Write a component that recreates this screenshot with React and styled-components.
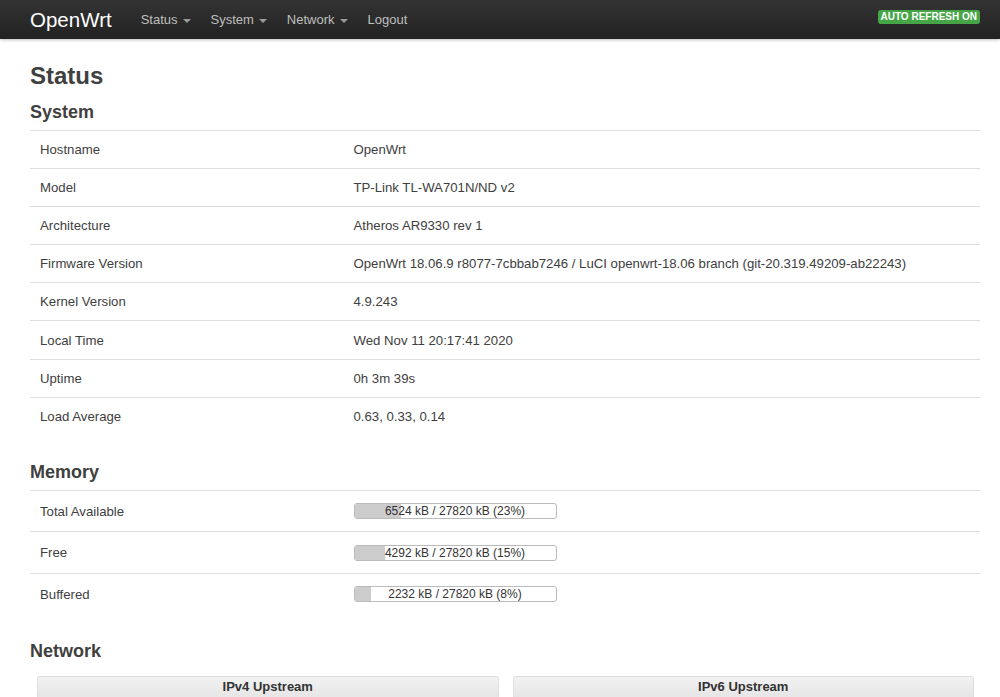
import React from "react";
import styled, { createGlobalStyle } from "styled-components";

const Global = createGlobalStyle`
  html, body {
    margin: 0;
    padding: 0;
    background: #fff;
    font-family: "Liberation Sans", Arial, sans-serif;
    color: #404040;
  }
`;

const Topbar = styled.div`
  height: 39px;
  background: linear-gradient(to bottom, #333333, #222222);
  box-shadow: 0 1px 3px rgba(0, 0, 0, 0.25);
  display: flex;
  align-items: center;
  padding: 0 20px 0 30px;
`;

const Brand = styled.a`
  color: #fff;
  font-size: 20.5px;
  line-height: 39px;
  margin-right: 19px;
  text-decoration: none;
`;

const Nav = styled.ul`
  display: flex;
  list-style: none;
  margin: 0;
  padding: 0;
  flex: 1;
`;

const NavItem = styled.li`
  color: #bfbfbf;
  font-size: 13px;
  padding: 0 10px;
  line-height: 39px;
  display: flex;
  align-items: center;
`;

const Caret = styled.span`
  display: inline-block;
  margin-left: 5px;
  margin-top: 2px;
  border-left: 4px solid transparent;
  border-right: 4px solid transparent;
  border-top: 4px solid #9a9a9a;
`;

const Badge = styled.span`
  background: #46a546;
  color: #fff;
  font-size: 10px;
  font-weight: bold;
  line-height: 14px;
  padding: 0 3px;
  border-radius: 3px;
  margin-top: -5px;
`;

const Main = styled.div`
  padding: 0 20px 0 30px;
`;

const Title = styled.h2`
  font-size: 24px;
  line-height: 30px;
  margin: 22px 0 9px;
  font-weight: bold;
`;

const Section = styled.h3`
  font-size: 18px;
  line-height: 24px;
  margin: ${(p) => p.$top || 0}px 0 ${(p) => p.$bottom || 6}px;
  font-weight: bold;
`;

const Table = styled.div`
  display: flex;
  flex-direction: column;
`;

const Row = styled.div`
  display: flex;
  align-items: center;
  border-top: 1px solid #dddddd;
  height: ${(p) => p.$h}px;
  box-sizing: border-box;
  font-size: 13.2px;
`;

const Label = styled.div`
  width: 33%;
  padding: 0 10px;
  box-sizing: border-box;
`;

const Value = styled.div`
  flex: 1;
  padding: 0 10px;
`;

const Bar = styled.div`
  position: relative;
  width: 201px;
  height: 14px;
  border: 1px solid #bbbbbb;
  border-radius: 3px;
  background: #fff;
  overflow: hidden;
`;

const Fill = styled.div`
  height: 100%;
  background: #cccccc;
`;

const BarText = styled.div`
  position: absolute;
  inset: 0;
  text-align: center;
  font-size: 12px;
  line-height: 15px;
  color: #333;
`;

const Columns = styled.div`
  display: flex;
  gap: 14px;
  padding: 0 6px 0 7px;
`;

const Box = styled.div`
  flex: 1;
  border: 1px solid #dddddd;
  border-bottom: none;
  border-radius: 3px 3px 0 0;
`;

const BoxHead = styled.div`
  background: linear-gradient(to bottom, #f2f2f2, #e6e6e6);
  text-align: center;
  font-weight: bold;
  font-size: 13px;
  line-height: 20px;
  color: #333;
`;

const system = [
  ["Hostname", "OpenWrt"],
  ["Model", "TP-Link TL-WA701N/ND v2"],
  ["Architecture", "Atheros AR9330 rev 1"],
  [
    "Firmware Version",
    "OpenWrt 18.06.9 r8077-7cbbab7246 / LuCI openwrt-18.06 branch (git-20.319.49209-ab22243)",
  ],
  ["Kernel Version", "4.9.243"],
  ["Local Time", "Wed Nov 11 20:17:41 2020"],
  ["Uptime", "0h 3m 39s"],
  ["Load Average", "0.63, 0.33, 0.14"],
];

const memory = [
  ["Total Available", 6524, 23],
  ["Free", 4292, 15],
  ["Buffered", 2232, 8],
];

export default function App() {
  return (
    <>
      <Global />
      <Topbar>
        <Brand>OpenWrt</Brand>
        <Nav>
          <NavItem>
            Status <Caret />
          </NavItem>
          <NavItem>
            System <Caret />
          </NavItem>
          <NavItem>
            Network <Caret />
          </NavItem>
          <NavItem>Logout</NavItem>
        </Nav>
        <Badge>AUTO REFRESH ON</Badge>
      </Topbar>
      <Main>
        <Title>Status</Title>
        <Section>System</Section>
        <Table>
          {system.map(([k, v]) => (
            <Row key={k} $h={38.1}>
              <Label>{k}</Label>
              <Value>{v}</Value>
            </Row>
          ))}
        </Table>
        <Section $top={25}>Memory</Section>
        <Table>
          {memory.map(([k, used, pct]) => (
            <Row key={k} $h={41.5}>
              <Label>{k}</Label>
              <Value>
                <Bar>
                  <Fill style={{ width: `${pct}%` }} />
                  <BarText>
                    {used} kB / 27820 kB ({pct}%)
                  </BarText>
                </Bar>
              </Value>
            </Row>
          ))}
        </Table>
        <Section $top={25} $bottom={13}>
          Network
        </Section>
        <Columns>
          <Box>
            <BoxHead>IPv4 Upstream</BoxHead>
          </Box>
          <Box>
            <BoxHead>IPv6 Upstream</BoxHead>
          </Box>
        </Columns>
      </Main>
    </>
  );
}
